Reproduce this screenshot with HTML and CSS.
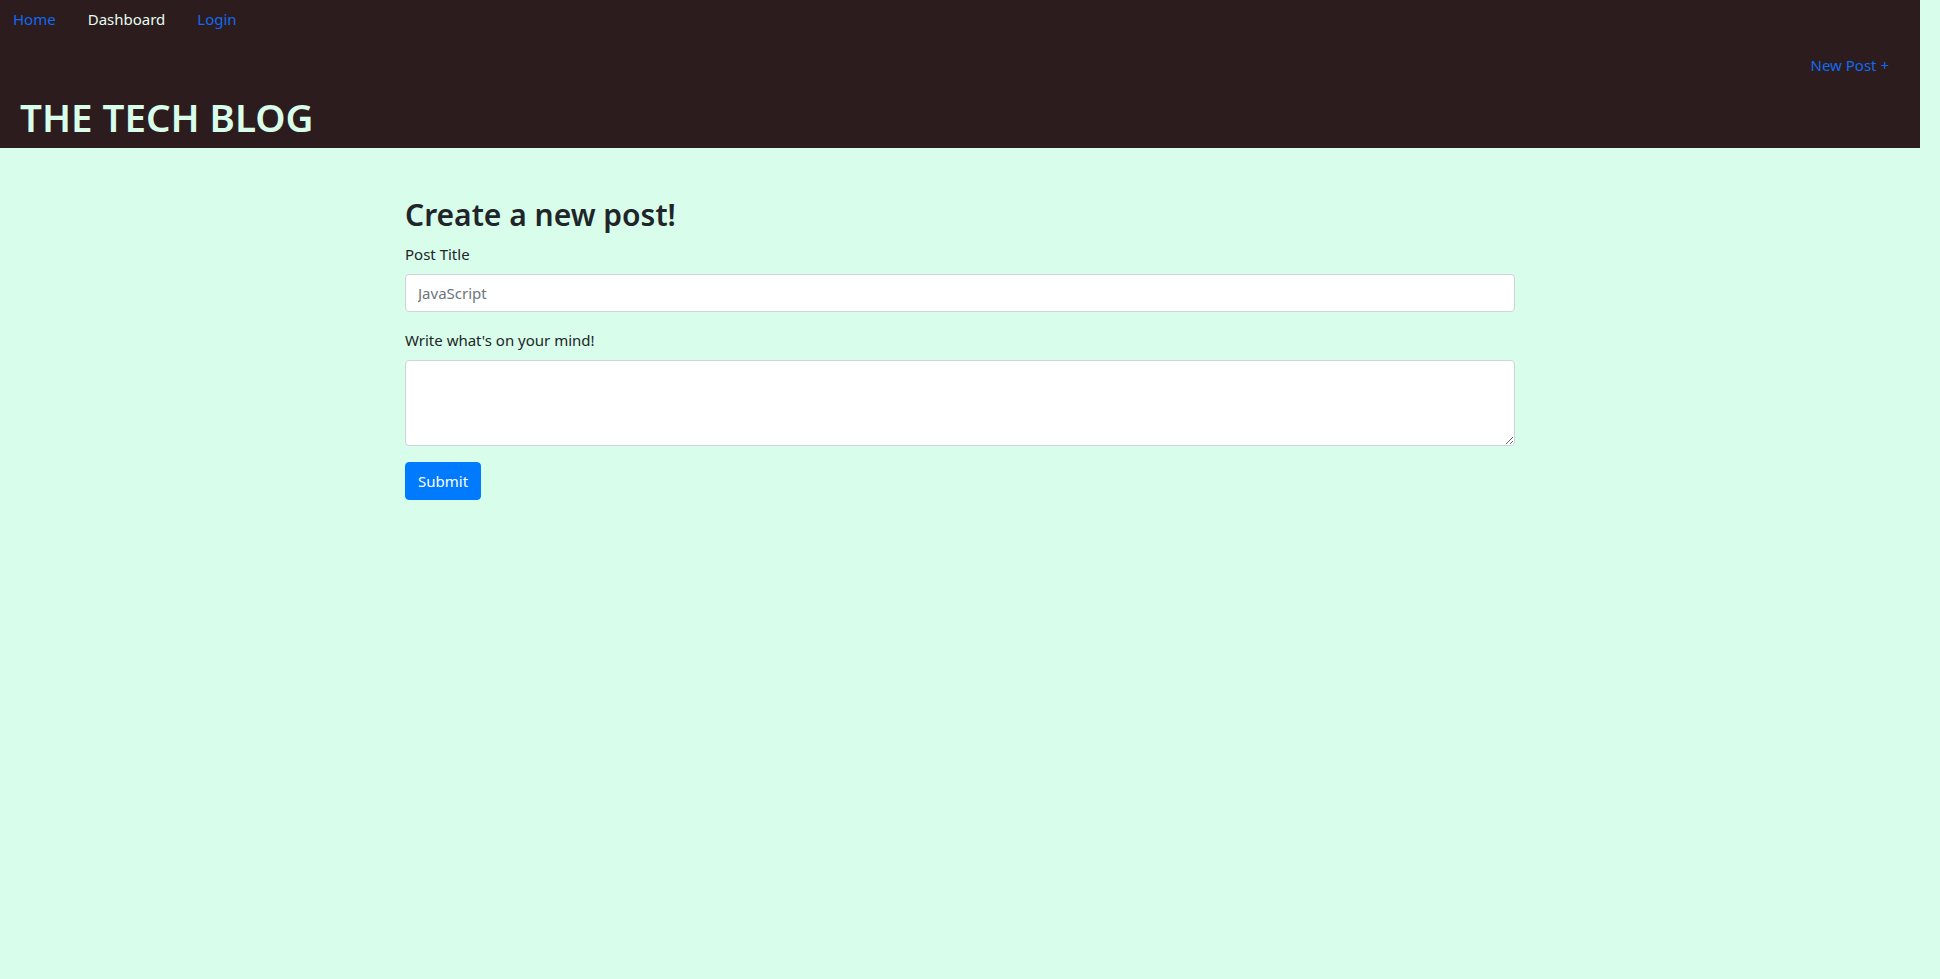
FILE: index.html
```html
<!DOCTYPE html>
<html lang="en">
<head>
<meta charset="utf-8">
<title>The Tech Blog</title>
<link rel="stylesheet" href="styles.css">
</head>
<body>
<div class="page">
  <header class="site-header">
    <nav class="top-nav">
      <a class="nav-link first" href="#">Home</a>
      <a class="nav-link active" href="#">Dashboard</a>
      <a class="nav-link" href="#">Login</a>
    </nav>
    <div class="action-row">
      <a class="nav-link" href="#">New Post +</a>
    </div>
    <h1 class="brand">THE TECH BLOG</h1>
  </header>
  <main class="container">
    <h2 class="page-title">Create a new post!</h2>
    <form class="post-form">
      <div class="form-group">
        <label for="title">Post Title</label>
        <input id="title" class="form-control" type="text" placeholder="JavaScript">
      </div>
      <div class="form-group">
        <label for="body">Write what's on your mind!</label>
        <textarea id="body" class="form-control" rows="3"></textarea>
      </div>
      <button type="submit" class="btn">Submit</button>
    </form>
  </main>
</div>
</body>
</html>
```
FILE: styles.css
```css
* { box-sizing: border-box; }
html, body { margin: 0; padding: 0; }
body {
  background: #d8fdea;
  color: #212529;
  font-family: "Noto Sans", "Open Sans", sans-serif;
  font-size: 15px;
  line-height: 24px;
  min-height: 979px;
}
.page { margin-right: 20px; }
.site-header {
  background: #2d1c1e;
  height: 148px;
  display: flex;
  flex-direction: column;
}
.top-nav { display: flex; }
.nav-link {
  display: block;
  padding: 7px 16px 9px;
  color: #0f6af0;
  text-decoration: none;
}
.nav-link.first { padding-left: 13px; }
.nav-link.active { color: #e6fdf0; }
.action-row {
  display: flex;
  justify-content: flex-end;
  margin-top: 6px;
  padding-right: 15px;
}
.brand {
  margin: 7px 0 5px 20px;
  font-size: 38.5px;
  font-weight: 600;
  line-height: 48px;
  color: #d8fdea;
}
.container {
  max-width: 1140px;
  margin: 0 auto;
  padding: 48px 15px 0;
}
.page-title {
  margin: 0 0 8px;
  font-size: 30px;
  font-weight: 600;
  line-height: 38px;
}
.form-group { margin-bottom: 16px; }
label { display: inline-block; margin-bottom: 8px; }
.form-control {
  display: block;
  width: 100%;
  height: 38px;
  padding: 6px 12px;
  font-family: inherit;
  font-size: 15px;
  line-height: 24px;
  color: #495057;
  background: #fff;
  border: 1px solid #ced4da;
  border-radius: 4px;
}
.form-control::placeholder { color: #6c757d; }
textarea.form-control { height: 86px; resize: vertical; }
.btn {
  display: inline-block;
  height: 38px;
  padding: 6px 12px;
  font-family: inherit;
  font-size: 15px;
  line-height: 24px;
  color: #fff;
  background: #007bff;
  border: 1px solid #007bff;
  border-radius: 4px;
}
```
